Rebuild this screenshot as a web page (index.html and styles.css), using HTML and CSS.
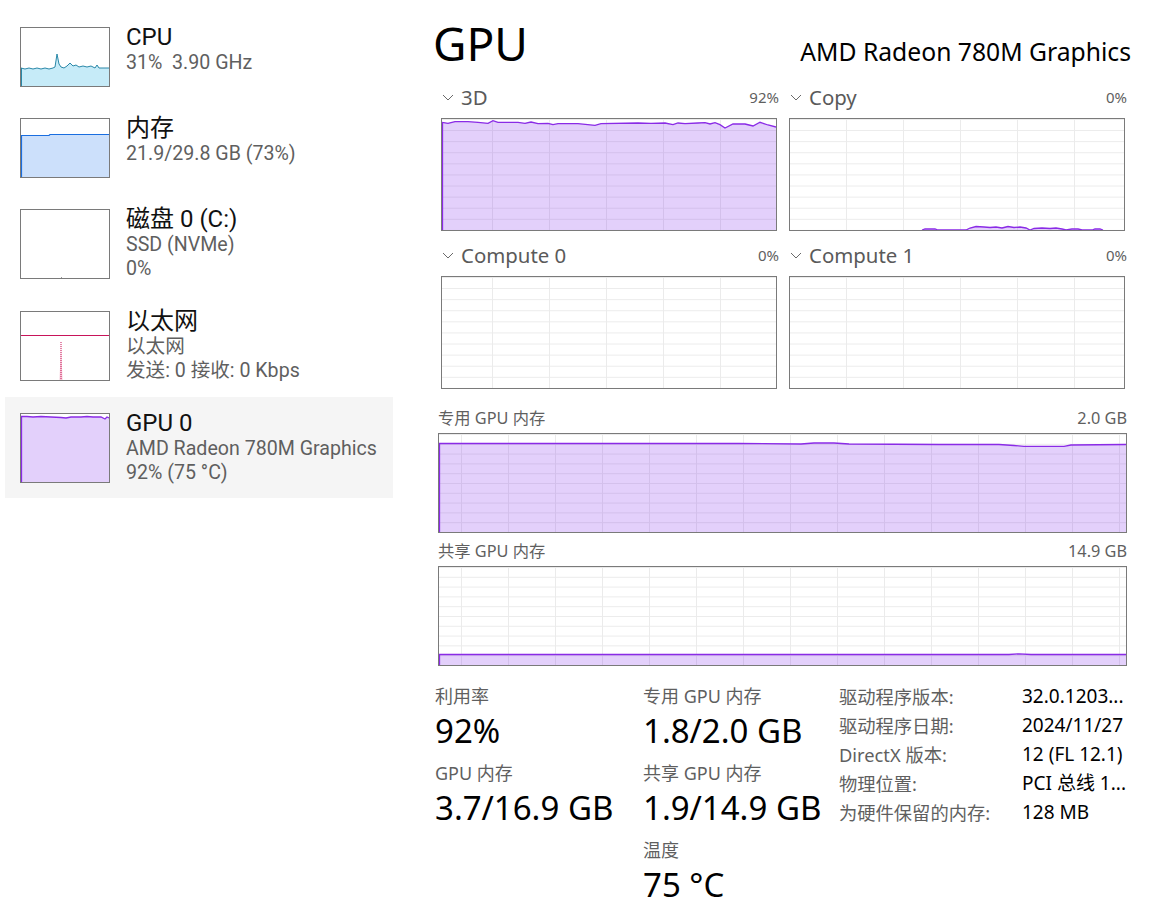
FILE: index.html
```html
<!DOCTYPE html>
<html lang="zh-CN">
<head>
<meta charset="utf-8">
<title>任务管理器 - GPU</title>
<link rel="stylesheet" href="styles.css">
</head>
<body>
<div class="app">
  <aside class="sidebar">
    <div class="item">
      <div class="thumb">
        <svg viewBox="0 0 88 58" preserveAspectRatio="none">
          <polygon class="cpu-fill" points="0,40 4,41 8,40 12,41 16,40 20,41 24,40 28,41 32,40 34,39 36,26 38,36 40,39 43,40 46,38 49,35 52,38 55,37 58,39 62,38 66,39 70,38 74,40 76,37 78,40 82,40 88,40 88,58 0,58"/>
          <polyline class="cpu-line" points="0,40 4,41 8,40 12,41 16,40 20,41 24,40 28,41 32,40 34,39 36,26 38,36 40,39 43,40 46,38 49,35 52,38 55,37 58,39 62,38 66,39 70,38 74,40 76,37 78,40 82,40 88,40"/>
          <line class="cpu-line" x1="0.5" y1="40" x2="0.5" y2="58"/>
        </svg>
      </div>
      <div class="info">
        <div class="name">CPU</div>
        <div class="sub">31%&nbsp; 3.90 GHz</div>
      </div>
    </div>
    <div class="item">
      <div class="thumb">
        <svg viewBox="0 0 88 58" preserveAspectRatio="none">
          <polygon class="mem-fill" points="0,16.5 28,16.5 29,15.5 88,15.5 88,58 0,58"/>
          <polyline class="mem-line" points="0,16.5 28,16.5 29,15.5 88,15.5"/>
          <line class="mem-line" x1="0.5" y1="16" x2="0.5" y2="58"/>
        </svg>
      </div>
      <div class="info">
        <div class="name">内存</div>
        <div class="sub">21.9/29.8 GB (73%)</div>
      </div>
    </div>
    <div class="item">
      <div class="thumb tall">
        <svg viewBox="0 0 88 68" preserveAspectRatio="none">
          <rect class="disk-dot" x="40" y="67" width="1" height="1"/>
        </svg>
      </div>
      <div class="info">
        <div class="name">磁盘 0 (C:)</div>
        <div class="sub">SSD (NVMe)</div>
        <div class="sub">0%</div>
      </div>
    </div>
    <div class="item spaced">
      <div class="thumb tall">
        <svg viewBox="0 0 88 68" preserveAspectRatio="none">
          <line class="net-line" x1="0" y1="23.5" x2="88" y2="23.5"/>
          <polygon class="net-fill" points="38.5,68 40,30 41.5,68"/>
          <line class="net-dots" x1="40" y1="30" x2="40" y2="68"/>
        </svg>
      </div>
      <div class="info">
        <div class="name">以太网</div>
        <div class="sub">以太网</div>
        <div class="sub">发送: 0 接收: 0 Kbps</div>
      </div>
    </div>
    <div class="item spaced selected">
      <div class="thumb tall">
        <svg viewBox="0 0 88 68" preserveAspectRatio="none">
          <polygon class="gpu-fill" points="0,2.5 6,2.5 12,3 20,2.5 30,3 40,3.5 45,4 50,3 60,3 66,2.5 72,3 80,3 84,5 86,3 88,4 88,68 0,68"/>
          <polyline class="gpu-line" points="0,2.5 6,2.5 12,3 20,2.5 30,3 40,3.5 45,4 50,3 60,3 66,2.5 72,3 80,3 84,5 86,3 88,4"/>
          <line class="gpu-line" x1="0.5" y1="2.5" x2="0.5" y2="68"/>
        </svg>
      </div>
      <div class="info">
        <div class="name">GPU 0</div>
        <div class="sub">AMD Radeon 780M Graphics</div>
        <div class="sub">92% (75 °C)</div>
      </div>
    </div>
  </aside>

  <main class="main">
    <header class="head">
      <h1 class="title">GPU</h1>
      <div class="model">AMD Radeon 780M Graphics</div>
    </header>

    <section class="engines">
      <div class="engine">
        <div class="eng-head">
          <svg class="chev" viewBox="0 0 12 7"><polyline points="1,1 6,6 11,1"/></svg>
          <span class="eng-name">3D</span>
          <span class="eng-pct">92%</span>
        </div>
        <div class="chart eng-chart grid-a">
          <svg viewBox="0 0 334 111" preserveAspectRatio="none">
            <polygon class="gpu-fill" points="0,3.3 6,4.3 13,2.7 26,2.7 36,3.3 46,4.3 51,1.7 56,3.3 76,3.3 83,4.3 89,3 96,4.7 106,4.3 111,5.7 116,4.7 136,4.7 153,6.3 159,4.7 196,4 209,4.3 223,4 231,5.7 236,4 243,4.7 256,4 263,3.7 268,5 273,3.7 278,5.7 283,9 291,5 303,5 311,7 318,3.3 326,6 334,8 334,111 0,111"/>
            <polyline class="gpu-line" points="0,3.3 6,4.3 13,2.7 26,2.7 36,3.3 46,4.3 51,1.7 56,3.3 76,3.3 83,4.3 89,3 96,4.7 106,4.3 111,5.7 116,4.7 136,4.7 153,6.3 159,4.7 196,4 209,4.3 223,4 231,5.7 236,4 243,4.7 256,4 263,3.7 268,5 273,3.7 278,5.7 283,9 291,5 303,5 311,7 318,3.3 326,6 334,8"/>
            <line class="gpu-line" x1="0.5" y1="3" x2="0.5" y2="111"/>
          </svg>
        </div>
      </div>
      <div class="engine">
        <div class="eng-head">
          <svg class="chev" viewBox="0 0 12 7"><polyline points="1,1 6,6 11,1"/></svg>
          <span class="eng-name">Copy</span>
          <span class="eng-pct">0%</span>
        </div>
        <div class="chart eng-chart grid-b">
          <svg viewBox="0 0 334 111" preserveAspectRatio="none">
            <polygon class="gpu-fill" points="132,111 135,110 145,110 148,111 176,111 180,109 186,107.5 194,108 200,108.5 206,108 212,109 218,107.5 224,108.5 230,108 236,109 240,111 244,109.5 252,109 260,109.5 266,109 272,110 276,111 282,110 288,110 292,111 302,111 305,110 310,110 313,111"/>
            <polyline class="gpu-line" points="132,111 135,110 145,110 148,111 176,111 180,109 186,107.5 194,108 200,108.5 206,108 212,109 218,107.5 224,108.5 230,108 236,109 240,111 244,109.5 252,109 260,109.5 266,109 272,110 276,111 282,110 288,110 292,111 302,111 305,110 310,110 313,111"/>
          </svg>
        </div>
      </div>
      <div class="engine">
        <div class="eng-head">
          <svg class="chev" viewBox="0 0 12 7"><polyline points="1,1 6,6 11,1"/></svg>
          <span class="eng-name">Compute 0</span>
          <span class="eng-pct">0%</span>
        </div>
        <div class="chart eng-chart grid-a"></div>
      </div>
      <div class="engine">
        <div class="eng-head">
          <svg class="chev" viewBox="0 0 12 7"><polyline points="1,1 6,6 11,1"/></svg>
          <span class="eng-name">Compute 1</span>
          <span class="eng-pct">0%</span>
        </div>
        <div class="chart eng-chart grid-b"></div>
      </div>
    </section>

    <section class="mem">
      <div class="mem-head"><span>专用 GPU 内存</span><span>2.0 GB</span></div>
      <div class="chart mem-chart">
        <svg viewBox="0 0 687 98" preserveAspectRatio="none">
          <polygon class="gpu-fill" points="0,9.5 300,9.5 362,10 375,9 395,9 410,10 500,10.5 560,10.5 575,11.5 585,12.3 625,12.3 632,11 687,10.5 687,98 0,98"/>
          <polyline class="gpu-line" points="0,9.5 300,9.5 362,10 375,9 395,9 410,10 500,10.5 560,10.5 575,11.5 585,12.3 625,12.3 632,11 687,10.5"/>
          <line class="gpu-line" x1="0.5" y1="9.5" x2="0.5" y2="98"/>
        </svg>
      </div>
    </section>

    <section class="mem mem-second">
      <div class="mem-head"><span>共享 GPU 内存</span><span>14.9 GB</span></div>
      <div class="chart mem-chart">
        <svg viewBox="0 0 687 98" preserveAspectRatio="none">
          <polygon class="gpu-fill" points="0,87.5 570,87.5 580,86.8 592,87.5 687,87.5 687,98 0,98"/>
          <polyline class="gpu-line" points="0,87.5 570,87.5 580,86.8 592,87.5 687,87.5"/>
          <line class="gpu-line" x1="0.5" y1="87.5" x2="0.5" y2="98"/>
        </svg>
      </div>
    </section>

    <section class="stats">
      <div class="stat-col">
        <div class="stat">
          <div class="stat-label">利用率</div>
          <div class="stat-value">92%</div>
        </div>
        <div class="stat">
          <div class="stat-label">GPU 内存</div>
          <div class="stat-value">3.7/16.9 GB</div>
        </div>
      </div>
      <div class="stat-col">
        <div class="stat">
          <div class="stat-label">专用 GPU 内存</div>
          <div class="stat-value">1.8/2.0 GB</div>
        </div>
        <div class="stat">
          <div class="stat-label">共享 GPU 内存</div>
          <div class="stat-value">1.9/14.9 GB</div>
        </div>
        <div class="stat">
          <div class="stat-label">温度</div>
          <div class="stat-value">75 °C</div>
        </div>
      </div>
      <dl class="props">
        <dt>驱动程序版本:</dt><dd>32.0.1203...</dd>
        <dt>驱动程序日期:</dt><dd>2024/11/27</dd>
        <dt>DirectX 版本:</dt><dd>12 (FL 12.1)</dd>
        <dt>物理位置:</dt><dd>PCI 总线 1...</dd>
        <dt>为硬件保留的内存:</dt><dd>128 MB</dd>
      </dl>
    </section>
  </main>
</div>
</body>
</html>
```
FILE: styles.css
```css
* { box-sizing: border-box; }

html, body {
  margin: 0;
  padding: 0;
  background: #ffffff;
}

body {
  font-family: "Noto Sans", "Noto Sans CJK SC", sans-serif;
  color: #000000;
  width: 1167px;
  height: 918px;
  overflow: hidden;
}

.app {
  display: flex;
  align-items: flex-start;
}

/* ---------- sidebar ---------- */
.sidebar {
  width: 393px;
  padding: 11px 0 0 5px;
  flex: none;
}

.item {
  display: flex;
  align-items: flex-start;
  gap: 16px;
  padding: 16px 15px 15px;
}

.item.spaced {
  margin-top: 1px;
}

.item.selected {
  background: #f5f5f5;
}

.thumb {
  width: 90px;
  height: 60px;
  border: 1px solid #7a7a7a;
  background: #ffffff;
  flex: none;
}

.thumb.tall {
  height: 70px;
}

.thumb svg,
.chart svg {
  display: block;
  width: 100%;
  height: 100%;
  overflow: hidden;
}

.info {
  margin: -4px 0 -6px;
  white-space: nowrap;
  font-family: Roboto, "Noto Sans CJK SC", sans-serif;
}

.name {
  font-size: 24px;
  line-height: 28px;
  color: #111111;
}

.sub {
  font-size: 19.6px;
  line-height: 24px;
  color: #5f5f5f;
}

.cpu-fill { fill: #c6ebf8; }
.cpu-line { fill: none; stroke: #2a88a8; stroke-width: 1; }
.mem-fill { fill: #cce0fb; }
.mem-line { fill: none; stroke: #1a6ee0; stroke-width: 1.2; }
.disk-dot { fill: #9a9a9a; }
.net-line { stroke: #c8145a; stroke-width: 1.2; }
.net-fill { fill: #f6c6d6; }
.net-dots { stroke: #c8145a; stroke-width: 1; stroke-dasharray: 1 1; }
.gpu-fill { fill: rgba(128, 40, 238, 0.22); }
.gpu-line { fill: none; stroke: #8a2be6; stroke-width: 1.3; }

/* ---------- main ---------- */
.main {
  margin-left: 40px;
  width: 698px;
  flex: none;
}

.head {
  display: flex;
  justify-content: space-between;
  align-items: baseline;
  padding-top: 19px;
  margin-bottom: 16px;
}

.title {
  margin: 0;
  font-size: 46px;
  font-weight: 400;
  line-height: 48px;
  color: #000000;
}

.model {
  font-size: 24.7px;
  color: #000000;
}

.engines {
  margin-left: 8px;
  display: grid;
  grid-template-columns: 338px 338px;
  column-gap: 10px;
  row-gap: 11px;
}

.eng-head {
  display: flex;
  align-items: center;
  height: 26px;
  color: #5a5a5a;
}

.chev {
  width: 12px;
  height: 7px;
  margin: 0 7px 0 1px;
  flex: none;
}

.chev polyline {
  fill: none;
  stroke: #6a6a6a;
  stroke-width: 1;
}

.eng-name {
  font-size: 20.4px;
}

.eng-pct {
  margin-left: auto;
  font-size: 15px;
  color: #5f5f5f;
}

.chart {
  border: 1px solid #7a7a7a;
  background-color: #ffffff;
  background-image:
    linear-gradient(to right, #ebebeb 1px, transparent 1px),
    linear-gradient(to bottom, #ebebeb 1px, transparent 1px);
  background-size: 57px 100%, 100% 10%;
  background-position: 50px 0, 0 0;
}

.eng-chart {
  margin-top: 8px;
  width: 336px;
  height: 113px;
}

.eng-chart.grid-b {
  background-position: 56px 0, 0 0;
}

.mem {
  margin: 18px 0 0 5px;
  width: 689px;
}

.mem.mem-second {
  margin-top: 7px;
}

.mem-head {
  display: flex;
  justify-content: space-between;
  font-size: 16.3px;
  line-height: 22px;
  color: #5f5f5f;
}

.mem-chart {
  margin-top: 4px;
  height: 100px;
  background-size: 47px 100%, 100% 10%;
  background-position: 22px 0, 0 0;
}

/* ---------- stats ---------- */
.stats {
  margin: 16px 0 0 2px;
  display: grid;
  grid-template-columns: 208px 196px 1fr;
  align-items: start;
}

.stat {
  margin-bottom: 8px;
}

.stat-label {
  font-size: 18px;
  line-height: 29px;
  color: #5f5f5f;
  white-space: nowrap;
}

.stat-value {
  font-size: 33px;
  line-height: 40px;
  color: #000000;
  white-space: nowrap;
}

.props {
  margin: 0;
  display: grid;
  grid-template-columns: 183px auto;
  line-height: 29px;
  white-space: nowrap;
}

.props dt {
  font-size: 18.3px;
  color: #5f5f5f;
}

.props dd {
  margin: 0;
  font-size: 19px;
  color: #000000;
}
```
